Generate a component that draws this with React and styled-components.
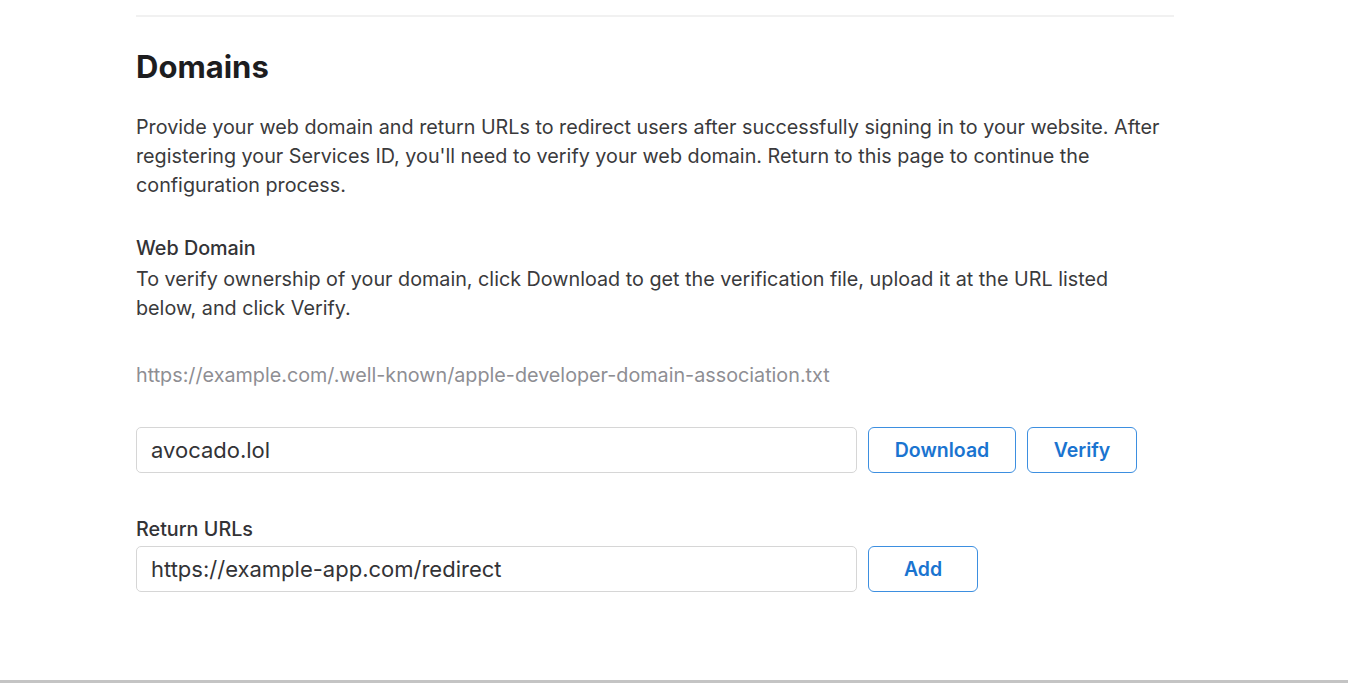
import React from "react";
import styled, { createGlobalStyle } from "styled-components";

const GlobalStyle = createGlobalStyle`
  html, body {
    margin: 0;
    padding: 0;
    background: #ffffff;
  }
  body {
    font-family: Inter, "Liberation Sans", Arial, sans-serif;
    -webkit-font-smoothing: antialiased;
  }
  * {
    box-sizing: border-box;
  }
`;

function App() {
  return (
    <>
      <GlobalStyle />
      <Page>
        <Column>
          <Divider />
          <Heading>Domains</Heading>
          <Intro>
            Provide your web domain and return URLs to redirect users after successfully signing in to your website. After
            registering your Services ID, you'll need to verify your web domain. Return to this page to continue the
            configuration process.
          </Intro>

          <Section>
            <Label>Web Domain</Label>
            <Help>
              To verify ownership of your domain, click Download to get the verification file, upload it at the URL listed
              below, and click Verify.
            </Help>
          </Section>

          <Hint>https://example.com/.well-known/apple-developer-domain-association.txt</Hint>

          <FieldRow>
            <TextField defaultValue="avocado.lol" />
            <Button $width={148}>Download</Button>
            <Button $width={110}>Verify</Button>
          </FieldRow>

          <ReturnBlock>
            <Label>Return URLs</Label>
            <FieldRow $gap={2.5}>
              <TextField defaultValue="https://example-app.com/redirect" />
              <Button $width={110}>Add</Button>
            </FieldRow>
          </ReturnBlock>
        </Column>
      </Page>
    </>
  );
}

const Page = styled.div`
  height: 100vh;
  width: 100vw;
  border-bottom: 3px solid #c4c4c4;
  background: #ffffff;
  overflow: hidden;
`;

const Column = styled.div`
  width: 1030px;
  margin-left: 136px;
  padding-top: 15px;
  display: flex;
  flex-direction: column;
  color: #3a3a3c;
`;

const Divider = styled.div`
  width: 1038px;
  height: 2px;
  background: #f1f1f1;
`;

const Heading = styled.h2`
  margin: 33px 0 0;
  font-size: 31px;
  line-height: 34px;
  font-weight: 700;
  color: #1d1d1f;
`;

const Intro = styled.p`
  margin: 28.5px 0 0;
  font-size: 19.75px;
  line-height: 29px;
`;

const Section = styled.div`
  margin-top: 34px;
  display: flex;
  flex-direction: column;
`;

const Label = styled.div`
  font-size: 19.75px;
  line-height: 29px;
  font-weight: 500;
  color: #333336;
`;

const Help = styled.p`
  margin: 2px 0 0;
  font-size: 19.75px;
  line-height: 29px;
`;

const Hint = styled.div`
  margin-top: 38px;
  font-size: 19.75px;
  line-height: 29px;
  color: #8e8e93;
`;

const FieldRow = styled.div`
  display: flex;
  align-items: center;
  gap: 11px;
  margin-top: ${(p) => (p.$gap !== undefined ? p.$gap : 37.5)}px;
`;

const TextField = styled.input`
  width: 721px;
  height: 46px;
  border: 1px solid #d6d6d6;
  border-radius: 5px;
  padding: 0 14px;
  font-family: inherit;
  font-size: 22px;
  color: #333336;
  background: #ffffff;
  outline: none;
`;

const Button = styled.button`
  width: ${(p) => p.$width}px;
  height: 46px;
  border: 1.5px solid #3d8fe0;
  border-radius: 6px;
  background: #ffffff;
  color: #1a74d0;
  font-family: inherit;
  font-size: 19.5px;
  font-weight: 600;
  cursor: pointer;
  padding: 0;
`;

const ReturnBlock = styled.div`
  margin-top: 41.5px;
  display: flex;
  flex-direction: column;
`;

export default App;
